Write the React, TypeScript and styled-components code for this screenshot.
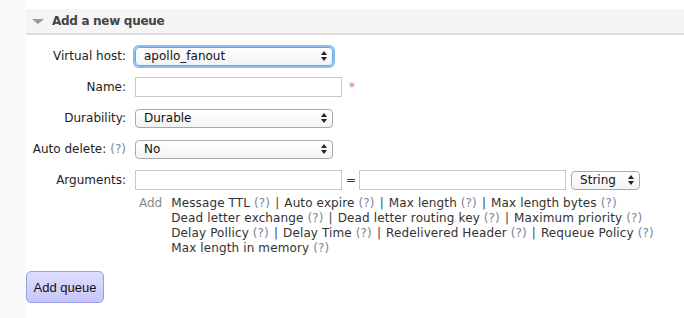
import React from 'react';
import styled, { createGlobalStyle, css } from 'styled-components';

const GlobalStyle = createGlobalStyle`
  html, body {
    margin: 0;
    padding: 0;
    background: #fafafa;
  }
  body {
    font-family: 'DejaVu Sans', Verdana, sans-serif;
    font-size: 12px;
    color: #222;
  }
`;

const Page = styled.div`
  width: 684px;
  height: 318px;
  display: flex;
  overflow: hidden;
`;

const Gutter = styled.div`
  width: 26px;
  flex: none;
  background: #fafafa;
`;

const Main = styled.div`
  flex: 1;
  background: #fff;
  padding-top: 9px;
`;

const SectionHeader = styled.div`
  height: 24px;
  display: flex;
  align-items: center;
  gap: 8px;
  padding-left: 6px;
  background: #f5f5f5;
  border-bottom: 2px solid #dedede;
  font-size: 12px;
  letter-spacing: -0.3px;
  font-weight: bold;
  color: #444;
`;

const Triangle = styled.span`
  width: 0;
  height: 0;
  border-left: 6px solid transparent;
  border-right: 6px solid transparent;
  border-top: 5px solid #9a9a9a;
  margin-top: 1px;
`;

const Form = styled.div`
  display: grid;
  grid-template-columns: 100px 1fr;
  grid-auto-rows: 30px;
  row-gap: 1px;
  column-gap: 9px;
  align-items: center;
  margin-top: 6px;
`;

const Label = styled.div`
  display: flex;
  justify-content: flex-end;
  gap: 4px;
  white-space: nowrap;
`;

const Help = styled.span`
  color: #7d8595;
`;

const Field = styled.div`
  display: flex;
  align-items: center;
  gap: 5px;
`;

const TextBox = styled.div<{ $width: number }>`
  width: ${({ $width }) => $width}px;
  height: 20px;
  box-sizing: border-box;
  border: 1px solid #c8c8c8;
  background: #fff;
`;

const Required = styled.span`
  color: #f07070;
  font-size: 12px;
  margin-left: 2px;
`;

const SelectBox = styled.div<{ $width: number; $focused?: boolean }>`
  width: ${({ $width }) => $width}px;
  height: 19px;
  box-sizing: border-box;
  border: 1px solid #a9a9a9;
  border-radius: 4px;
  background: linear-gradient(#ffffff, #f3f3f3);
  display: flex;
  align-items: center;
  justify-content: space-between;
  padding: 0 5px 0 8px;
  color: #111;
  ${({ $focused }) =>
    $focused &&
    css`
      border-color: #6aa7e8;
      box-shadow: 0 0 0 2px #8cbcf0;
    `}
`;

const Arrows = () => (
  <svg width="6" height="10" viewBox="0 0 6 10">
    <path d="M3 0 L6 4 L0 4 Z" fill="#222" />
    <path d="M0 6 L6 6 L3 10 Z" fill="#222" />
  </svg>
);

const Equals = styled.span`
  color: #333;
  margin: 0 -2px 0 -1px;
`;

const HelpBlock = styled.div`
  display: flex;
  gap: 9px;
  margin-left: 113px;
  margin-top: 1px;
  line-height: 15px;
`;

const AddWord = styled.span`
  color: #8a8a8a;
`;

const Links = styled.div`
  color: #333;
  white-space: nowrap;
  letter-spacing: 0.12px;
`;

const Sep = styled.span`
  color: #444;
  margin: 0 5px;
`;

const Button = styled.div`
  margin-top: 15px;
  width: 78px;
  height: 32px;
  box-sizing: border-box;
  border: 1px solid #9c9ce0;
  border-radius: 5px;
  background: linear-gradient(#dedeff, #c6c6fb);
  display: flex;
  align-items: center;
  justify-content: center;
  font-family: 'Liberation Sans', Arial, sans-serif;
  font-size: 13px;
  color: #111;
`;

type Arg = { name: string };

const lines: Arg[][] = [
  [{ name: 'Message TTL' }, { name: 'Auto expire' }, { name: 'Max length' }, { name: 'Max length bytes' }],
  [{ name: 'Dead letter exchange' }, { name: 'Dead letter routing key' }, { name: 'Maximum priority' }],
  [{ name: 'Delay Pollicy' }, { name: 'Delay Time' }, { name: 'Redelivered Header' }, { name: 'Requeue Policy' }],
  [{ name: 'Max length in memory' }],
];

const App: React.FC = () => (
  <>
    <GlobalStyle />
    <Page>
      <Gutter />
      <Main>
        <SectionHeader>
          <Triangle />
          Add a new queue
        </SectionHeader>

        <Form>
          <Label>Virtual host:</Label>
          <Field>
            <SelectBox $width={198} $focused>
              apollo_fanout
              <Arrows />
            </SelectBox>
          </Field>

          <Label>Name:</Label>
          <Field>
            <TextBox $width={207} />
            <Required>*</Required>
          </Field>

          <Label>Durability:</Label>
          <Field>
            <SelectBox $width={198}>
              Durable
              <Arrows />
            </SelectBox>
          </Field>

          <Label>
            <span>Auto delete:</span>
            <Help>(?)</Help>
          </Label>
          <Field>
            <SelectBox $width={198}>
              No
              <Arrows />
            </SelectBox>
          </Field>

          <Label>Arguments:</Label>
          <Field>
            <TextBox $width={207} />
            <Equals>=</Equals>
            <TextBox $width={207} />
            <SelectBox $width={69}>
              String
              <Arrows />
            </SelectBox>
          </Field>
        </Form>

        <HelpBlock>
          <AddWord>Add</AddWord>
          <Links>
            {lines.map((line, i) => (
              <div key={i}>
                {line.map((arg, j) => (
                  <React.Fragment key={arg.name}>
                    {j > 0 && <Sep>|</Sep>}
                    {arg.name} <Help>(?)</Help>
                  </React.Fragment>
                ))}
              </div>
            ))}
          </Links>
        </HelpBlock>

        <Button>Add queue</Button>
      </Main>
    </Page>
  </>
);

export default App;
